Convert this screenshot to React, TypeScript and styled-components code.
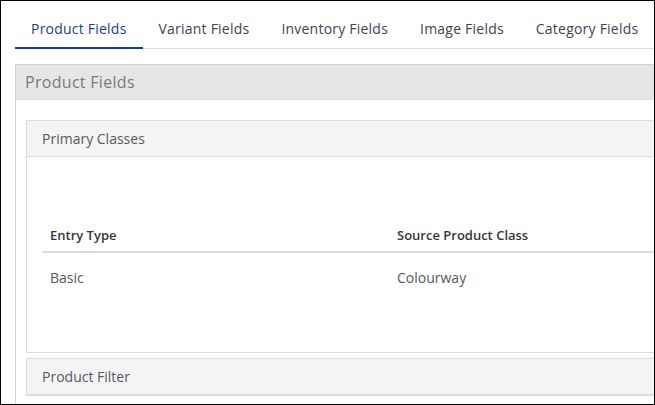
import styled, { createGlobalStyle } from "styled-components";

const GlobalStyle = createGlobalStyle`
  html, body {
    margin: 0;
    padding: 0;
    background: #ffffff;
    font-family: "Open Sans", "Noto Sans", sans-serif;
  }

  * {
    box-sizing: border-box;
  }
`;

const Frame = styled.div`
  width: 655px;
  height: 405px;

  border: 1px solid #000000;

  overflow: hidden;
`;

const Page = styled.div`
  width: 1000px;
  padding-left: 14px;
`;

const TabBar = styled.ul`
  display: flex;

  margin: 0;
  padding: 0;
  border-bottom: 1px solid #dedede;

  list-style: none;
`;

const Tab = styled.li<{ $active?: boolean }>`
  padding: 18px 16px 8px;
  margin-bottom: -1px;
  border-bottom: 2px solid ${(p) => (p.$active ? "#1b3a99" : "transparent")};

  font-size: 14px;
  font-weight: 500;
  line-height: 20px;
  letter-spacing: 0.22px;
  white-space: nowrap;

  color: ${(p) => (p.$active ? "#1f3b8a" : "#3f4352")};

  cursor: pointer;
`;

const Panel = styled.section<{ $nested?: boolean }>`
  margin-top: ${(p) => (p.$nested ? "0" : "15px")};
  margin-bottom: ${(p) => (p.$nested ? "5px" : "0")};
  border: 1px solid ${(p) => (p.$nested ? "#dddddd" : "#d4d4d4")};

  background: #ffffff;
`;

const PanelHeader = styled.div<{ $nested?: boolean }>`
  display: flex;
  align-items: center;

  height: ${(p) => (p.$nested ? "36px" : "35px")};
  padding-left: ${(p) => (p.$nested ? "15px" : "9px")};
  border-bottom: 1px solid #dddddd;

  background: ${(p) => (p.$nested ? "#f4f4f4" : "#e6e6e6")};
  color: ${(p) => (p.$nested ? "#555a60" : "#7a7a7a")};

  font-size: ${(p) => (p.$nested ? "14px" : "16px")};
  letter-spacing: ${(p) => (p.$nested ? "0" : "0.3px")};
`;

const PanelBody = styled.div`
  padding: 20px 10px;
`;

const NestedBody = styled.div`
  padding: 60px 15px 51px;
`;

const Table = styled.table`
  width: 694px;

  border-collapse: collapse;

  font-size: 13px;
  text-align: left;
`;

const HeadCell = styled.th`
  width: 347px;
  padding: 8px 8px 6px;
  border-bottom: 2px solid #dcdcdc;

  font-weight: 600;
  line-height: 20px;

  color: #33363c;
`;

const Cell = styled.td`
  padding: 15px 8px 13px;

  font-size: 14px;
  line-height: 20px;

  color: #555a60;
`;

export default function App() {
  const tabs = [
    "Product Fields",
    "Variant Fields",
    "Inventory Fields",
    "Image Fields",
    "Category Fields",
  ];

  return (
    <>
      <GlobalStyle />
      <Frame>
        <Page>
          <TabBar>
            {tabs.map((tab, i) => (
              <Tab key={tab} $active={i === 0}>
                {tab}
              </Tab>
            ))}
          </TabBar>

          <Panel>
            <PanelHeader>Product Fields</PanelHeader>
            <PanelBody>
              <Panel $nested>
                <PanelHeader $nested>Primary Classes</PanelHeader>
                <NestedBody>
                  <Table>
                    <thead>
                      <tr>
                        <HeadCell>Entry Type</HeadCell>
                        <HeadCell>Source Product Class</HeadCell>
                      </tr>
                    </thead>
                    <tbody>
                      <tr>
                        <Cell>Basic</Cell>
                        <Cell>Colourway</Cell>
                      </tr>
                    </tbody>
                  </Table>
                </NestedBody>
              </Panel>

              <Panel $nested>
                <PanelHeader $nested>Product Filter</PanelHeader>
              </Panel>
            </PanelBody>
          </Panel>
        </Page>
      </Frame>
    </>
  );
}
